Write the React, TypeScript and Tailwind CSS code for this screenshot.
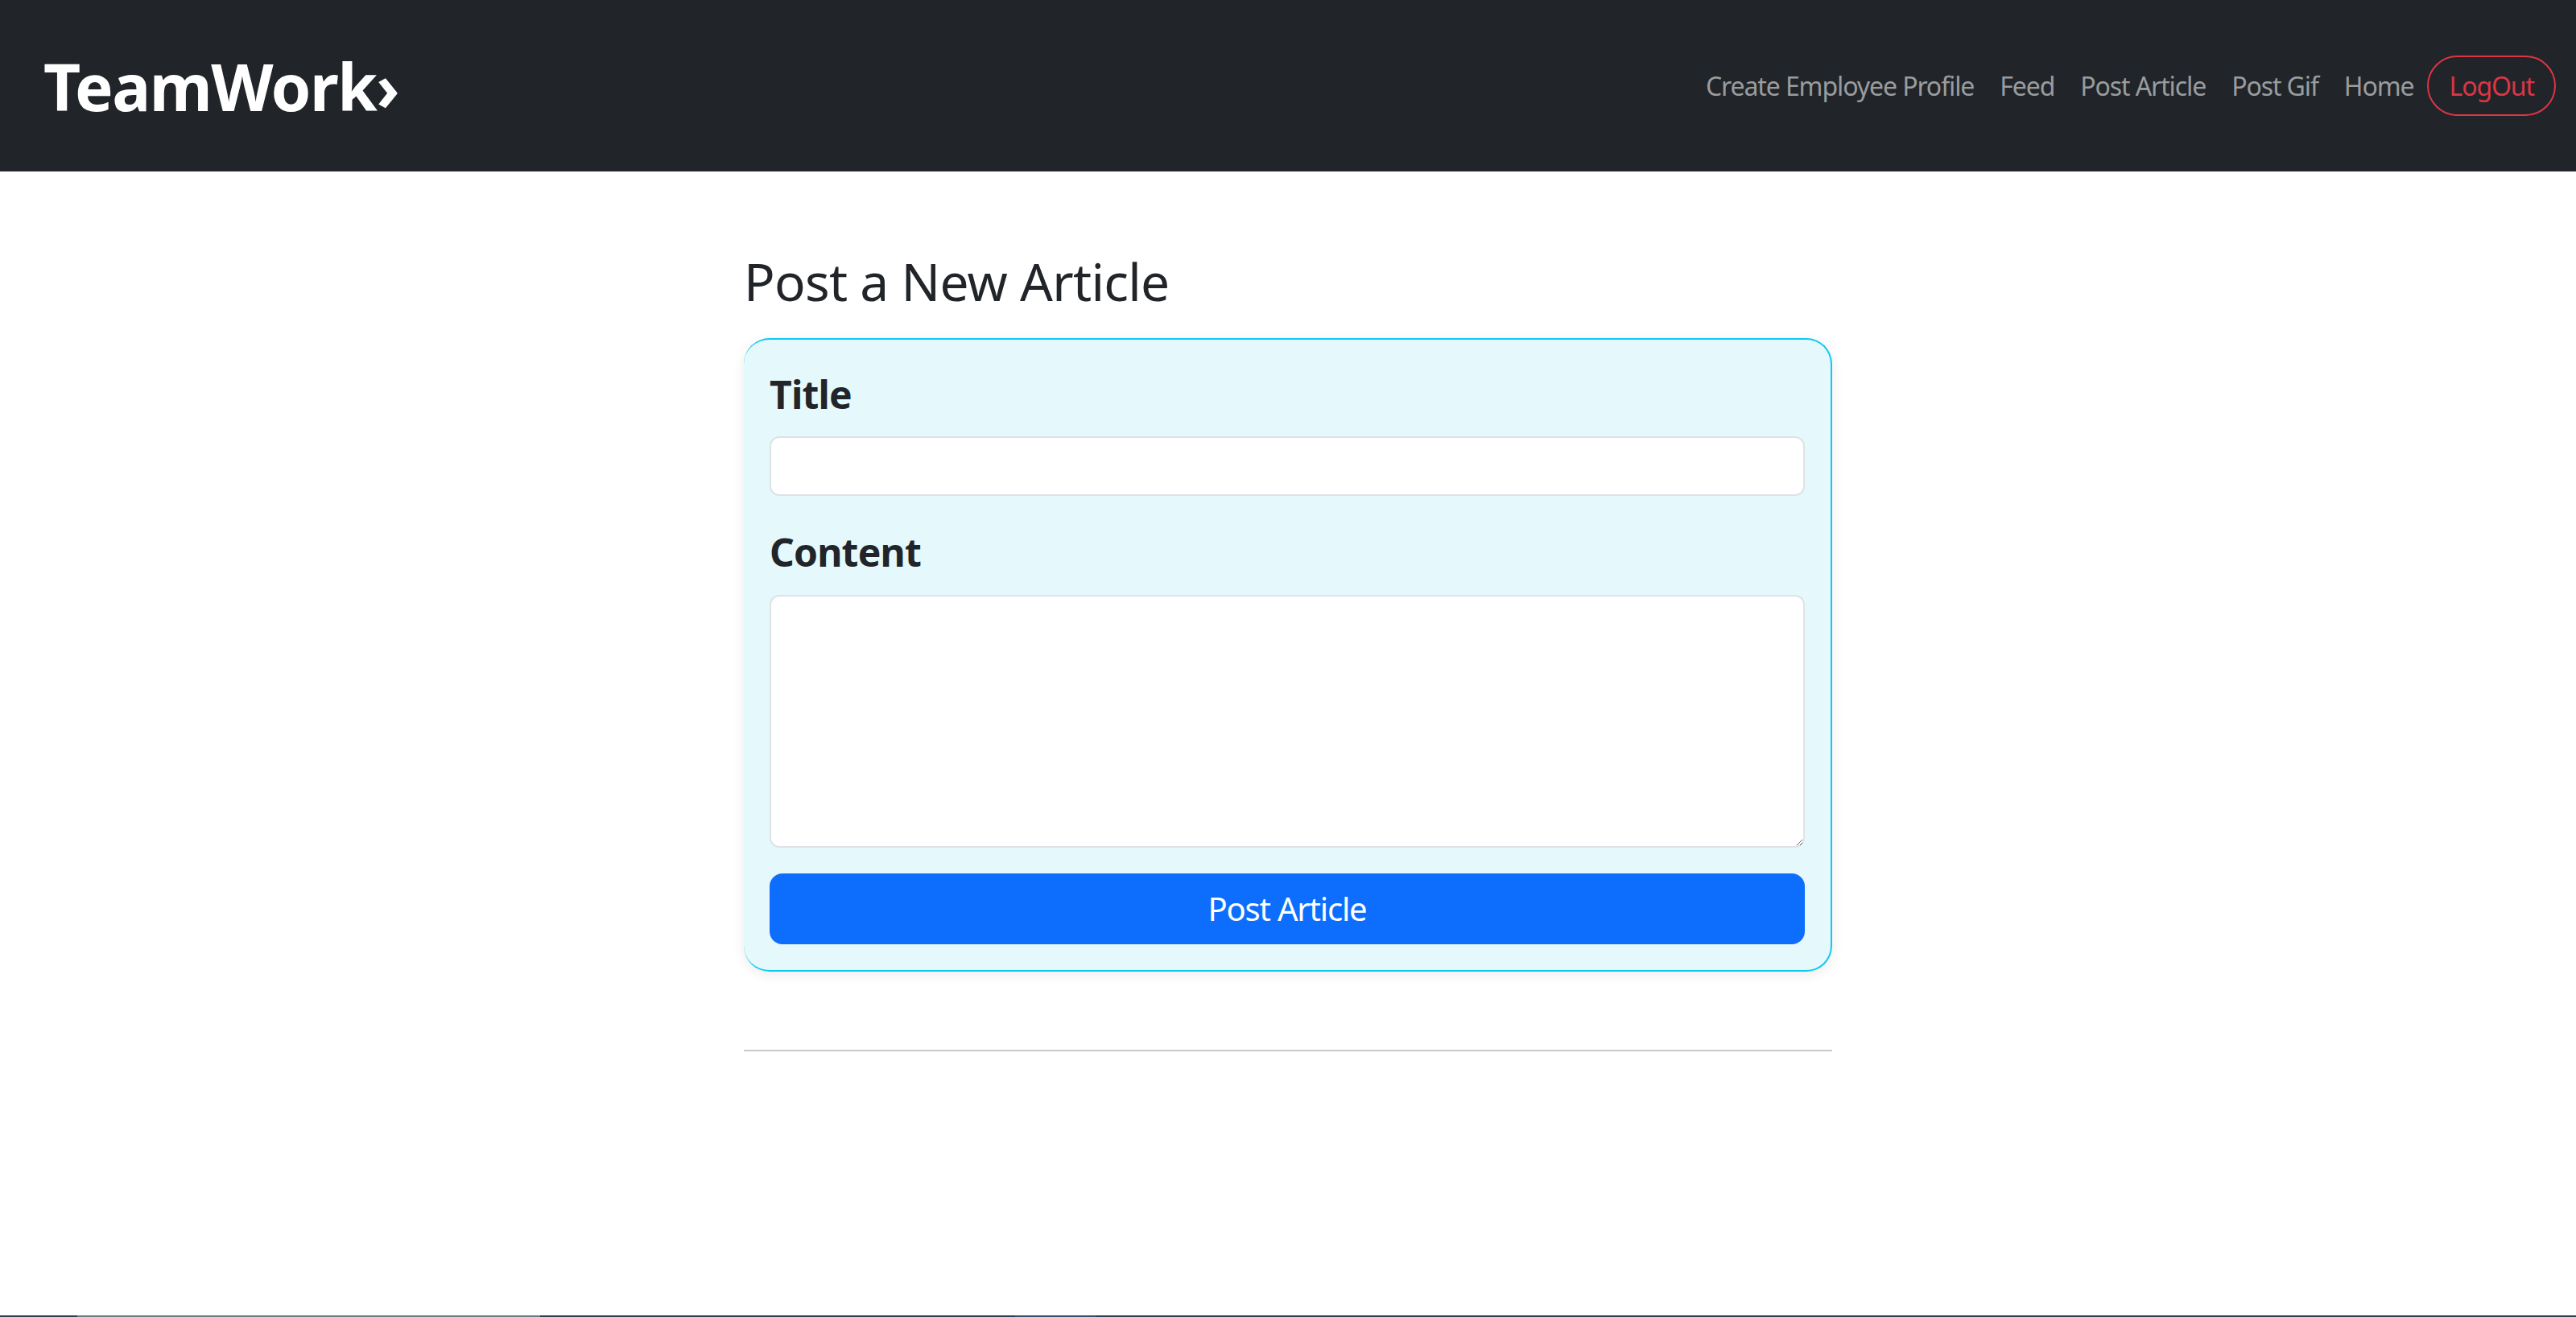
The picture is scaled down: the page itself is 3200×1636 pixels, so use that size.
import React from 'react';

const links = ['Create Employee Profile', 'Feed', 'Post Article', 'Post Gif', 'Home'];

export default function App() {
  return (
    <div className="min-h-[1636px] flex flex-col bg-white text-[#212529] font-['Noto_Sans',sans-serif]">
      <nav className="h-[213px] bg-[#212529] flex items-center justify-between pl-[54px] pr-[25px]">
        <a className="text-white font-bold text-[80px] leading-none tracking-[-1.5px]">TeamWork›</a>
        <div className="flex items-center">
          {links.map((l) => (
            <a key={l} className="px-[16px] text-[32px] text-[#9a9c9e] leading-[48px] tracking-[-1.1px]">{l}</a>
          ))}
          <button className="ml-[1px] h-[75px] px-[25px] rounded-full border-2 border-[#dc3545] text-[#dc3545] text-[32px] leading-none tracking-[-1.1px]">
            LogOut
          </button>
        </div>
      </nav>

      <main className="flex-1 w-[1352px] mx-auto pt-[99px]">
        <h2 className="text-[64px] leading-[1.2] font-normal mb-[31px] tracking-[-0.7px]">Post a New Article</h2>
        <form className="bg-[#e5f8fc] border-y-2 border-r-2 border-l-0 border-[#0dcaf0] rounded-[32px] shadow-[0_4px_16px_rgba(0,0,0,0.08)] px-[32px] pt-[32px] pb-[32px]">
          <label className="block text-[48px] leading-[72px] font-bold mb-[16px] tracking-[-0.8px]">Title</label>
          <input type="text" className="block w-full h-[74px] bg-white border-2 border-[#dee2e6] rounded-[12px] px-[24px] text-[32px] mb-[34px] outline-none" />
          <label className="block text-[48px] leading-[72px] font-bold mb-[17px] tracking-[-0.8px]">Content</label>
          <textarea className="block w-full h-[314px] bg-white border-2 border-[#dee2e6] rounded-[12px] px-[24px] py-[12px] text-[32px] mb-[32px] outline-none" />
          <button type="button" className="block w-full h-[88px] bg-[#0d6efd] rounded-[16px] text-white text-[40px] leading-none tracking-[-1.2px]">
            Post Article
          </button>
        </form>
        <hr className="mt-[97px] border-0 border-t-2 border-[#c8c9ca]" />
      </main>

      <footer className="h-[2px] flex bg-[#2c3e50]">
        <div className="w-[96px]" />
        <div className="w-[575px] bg-[#6c7a80]" />
        <div className="w-[590px]" />
        <div className="w-[100px] bg-[#34506a]" />
      </footer>
    </div>
  );
}
